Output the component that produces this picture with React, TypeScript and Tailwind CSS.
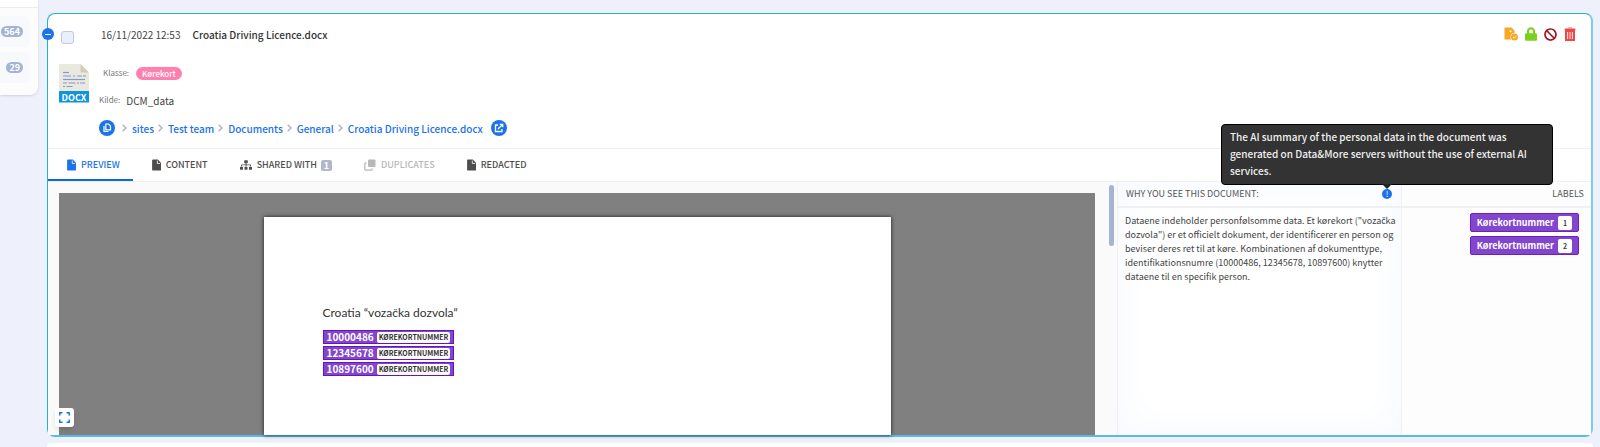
import { FaSitemap, FaLock, FaBan } from 'react-icons/fa';

const crumbs = ['sites', 'Test team', 'Documents', 'General', 'Croatia Driving Licence.docx'];
const numbers = ['10000486', '12345678', '10897600'];

function FileIcon() {
  return (
    <svg viewBox="0 0 9 12" className="w-[9px] h-3 shrink-0">
      <path d="M1 .5h4.800L9 3.800v6.900c0 .5-.4.900-.9.900H1c-.5 0-.9-.4-.9-.9V1.400C.1.900.5.500 1 .5z" fill="currentColor" />
      <path d="M5.300 1.600v2.900h2.800" fill="none" stroke="#fff" strokeWidth="0.8" />
    </svg>
  );
}

function DuplicateIcon() {
  return (
    <svg viewBox="0 0 12 12" className="w-3 h-3 shrink-0" fill="none">
      <rect x="4" y="0.5" width="7.500" height="7.500" rx="1" fill="currentColor" />
      <path d="M2.500 3.800H1.800c-.6 0-1 .4-1 1v5.400c0 .6.4 1 1 1h5.400c.6 0 1-.4 1-1V9.500" stroke="currentColor" strokeWidth="1.3" />
    </svg>
  );
}

function Chevron() {
  return (
    <svg viewBox="0 0 5 8" className="w-[5px] h-2 mr-[5px] shrink-0" fill="none" stroke="#b0b3c6" strokeWidth="1.500">
      <path d="M.7.700L4 4 .7 7.300" />
    </svg>
  );
}

function DocxIcon() {
  return (
    <svg viewBox="0 0 30 39" className="w-[30px] h-[39px]">
      <path d="M1 0h20.500l8.500 8.500V27H0V1a1 1 0 0 1 1-1z" fill="#e9e9e0" />
      <path d="M21.500 0v8.500H30z" fill="#d0cfb0" />
      <g stroke="#8697cb" strokeWidth="1.200">
        <path d="M4 8.500h6" />
        <path d="M4 12h8M14 12h2M18 12h5M24 12h3" />
        <path d="M4 15.500h22" />
        <path d="M4 19h4M9.500 19h7M18 19h2M21 19h5" />
        <path d="M4 22.500h2M7.500 22.500h6" />
      </g>
      <path d="M0 27h30v11.500H0z" fill="#0e95de" />
      <text x="15" y="36.500" textAnchor="middle" fontSize="9" fontWeight="700" fill="#fff">DOCX</text>
    </svg>
  );
}

function Tab({ label, active, disabled, children, count }: any) {
  return (
    <button
      type="button"
      disabled={disabled}
      className={
        'h-8 flex items-center gap-[5px] border-b-2 pt-[2px] pl-[19px] pr-[13px] text-[9px] font-medium ' +
        (active
          ? 'border-[#0d66e8] text-[#1a73e8]'
          : disabled
            ? 'border-transparent text-[#b8b8b8]'
            : 'border-transparent text-[#4d4d4d]')
      }
    >
      {children}
      <span>{label}</span>
      {count && <span className="-ml-px w-[11px] h-[11px] rounded-xs bg-[#b3b7cb] text-white leading-[11px] font-bold">{count}</span>}
    </button>
  );
}

function LabelTag({ count }: { count: number }) {
  return (
    <div className="flex items-center gap-1 h-[19px] px-[6px] rounded-xs border border-[#6f1fc4] bg-[#8246cc] text-white text-[9px] font-bold">
      <span>Kørekortnummer</span>
      <span className="w-[14px] h-[14px] rounded-xs bg-white text-[#444] text-[7px] leading-[14px] text-center">{count}</span>
    </div>
  );
}

function SidebarRow({ count }: { count: number }) {
  return (
    <div className="mr-2 h-[31px] rounded-r-md bg-[#f8f9fc] flex items-center justify-end pr-[7px]">
      <span className="rounded-full px-[3px] h-[11px] leading-[11px] bg-[#a3b4d4] text-white text-[9px] font-bold">{count}</span>
    </div>
  );
}

function Sidebar() {
  return (
    <aside className="w-[38px] shrink-0 h-[95px] bg-[#fcfcfd] rounded-br-lg shadow-sm">
      <div className="h-2 mb-2 bg-white border-b border-[#ebebf0]" />
      <div className="flex flex-col gap-[5px]">
        <SidebarRow count={564} />
        <SidebarRow count={29} />
      </div>
    </aside>
  );
}

function DocumentHeader() {
  return (
    <header className="relative h-[135px] border-b border-[#f0f0f0]">
      <button type="button" aria-label="Collapse" className="absolute -left-[6px] top-[14px] w-3 h-3 rounded-full bg-[#1a73e8] flex items-center justify-center">
        <span className="w-[6px] h-px bg-white" />
      </button>
      <div className="flex items-center h-10 mb-[2px] pl-[13px] pr-[15px]">
        <input type="checkbox" aria-label="Select document" className="appearance-none w-[13px] h-[13px] mt-[7px] rounded-[3px] border border-[#c3c8dc] bg-[#e9effd]" />
        <time className="ml-[27px] text-[10px] text-[#444]">16/11/2022 12:53</time>
        <h2 className="ml-3 text-[10px] font-medium text-[#333]">Croatia Driving Licence.docx</h2>
        <div className="ml-auto flex items-center gap-[7px]">
          <button type="button" aria-label="Approve document">
            <svg viewBox="0 0 14 14" className="w-[14px] h-[14px]">
              <path d="M1 .5h6.500L10.500 3.500v4H9L7 9.500V12.500H.500V1z" fill="#f8a825" />
              <circle cx="6.500" cy="4.300" r="1" fill="#fff" />
              <circle cx="10.500" cy="10" r="4" fill="#fff" />
              <circle cx="10.500" cy="10" r="3.500" fill="#f8a825" />
              <path d="M9 10l1.200 1.200 2-2.200" fill="none" stroke="#fff" strokeWidth=".8" />
            </svg>
          </button>
          <button type="button" aria-label="Lock"><FaLock className="w-3 h-[14px] text-[#7ad11d]" /></button>
          <button type="button" aria-label="Ignore"><FaBan className="w-[13px] h-[13px] text-[#a80f1c]" /></button>
          <button type="button" aria-label="Delete">
            <svg viewBox="0 0 12 14" className="w-3 h-[14px]" fill="none" stroke="#f04848">
              <path d="M4 .8h4" stroke="#c9a0a0" />
              <path d="M.7 2.500h10.600" strokeWidth="2" />
              <path d="M2 4h8v9H2z" fill="#fbd5d5" strokeWidth="2" />
              <path d="M4.800 4v9M7.200 4v9" strokeWidth="1.300" />
            </svg>
          </button>
        </div>
      </div>
      <div className="flex pl-[11px]">
        <div className="pt-2"><DocxIcon /></div>
        <div className="pl-[10px]">
          <div className="flex items-center h-[34px] pl-1 gap-[7px]">
            <span className="text-[8px] text-[#777]">Klasse:</span>
            <span className="rounded-full h-[13px] leading-[13px] px-[6px] bg-[#ff7fb0] text-white text-[8px] font-medium">Kørekort</span>
          </div>
          <div className="flex items-center h-5 gap-[6px]">
            <span className="text-[8px] text-[#777]">Kilde:</span>
            <span className="text-[10px] text-[#444]">DCM_data</span>
          </div>
          <nav className="flex items-center h-9 text-[10px] font-medium text-[#1a73e8]">
            <button type="button" aria-label="Copy path" className="mr-[7px] w-4 h-4 rounded-full bg-[#1a73e8] flex items-center justify-center">
              <svg viewBox="0 0 10 10" className="w-[10px] h-[10px]" fill="none" stroke="#fff" strokeWidth="1.200">
                <path d="M3.800 1h2.700L8.500 3v3.800H3.800z" />
                <path d="M2 3v5.500h4.500" />
              </svg>
            </button>
            {crumbs.map((crumb) => (
              <span key={crumb} className="flex items-center">
                <Chevron />
                <a href="#" className="mr-1">{crumb}</a>
              </span>
            ))}
            <button type="button" aria-label="Open document" className="ml-1 w-4 h-4 rounded-full bg-[#1a73e8] flex items-center justify-center">
              <svg viewBox="0 0 10 10" className="w-[10px] h-[10px]" fill="none" stroke="#fff" strokeWidth="1.300">
                <path d="M4 2H1.500v6.500H8V6" />
                <path d="M4 6l4.500-4.500M5.700 1.300h3v3" />
              </svg>
            </button>
          </nav>
        </div>
      </div>
    </header>
  );
}

function Preview() {
  return (
    <section className="relative flex-1 min-w-0 flex bg-[#fafafa] pt-[11px] pl-[11px]">
      <div className="flex-1 bg-[#808080] pt-6 flex justify-center">
        <article className="w-[627px] bg-white shadow-[0_0_4px_rgba(0,0,0,0.8)] px-[59px] pt-[86px]">
          <p className="font-[Lato,sans-serif] text-[12px] leading-5 text-[#333]">Croatia “vozačka dozvola”</p>
          <ul className="mt-[7px] flex flex-col items-start gap-[2px]">
            {numbers.map((n) => (
              <li key={n} className="flex items-center gap-[3px] h-[14px] px-[3px] border border-[#6a12c2] bg-[#8246cc] text-white text-[10px] font-bold">
                <span className="leading-3">{n}</span>
                <span className="h-[11px] leading-[11px] px-[2px] rounded-xs bg-white text-[#333] text-[7px]">KØREKORTNUMMER</span>
              </li>
            ))}
          </ul>
        </article>
      </div>
      <div className="w-[22px] shrink-0 flex justify-center">
        <div className="-mt-2 ml-[10px] w-[5px] h-[61px] rounded-full bg-[#a3b4d4]" />
      </div>
      <button type="button" aria-label="Full screen" className="absolute left-[7px] bottom-2 w-[19px] h-[19px] rounded-[3px] bg-white shadow-md flex items-center justify-center">
        <svg viewBox="0 0 11 11" className="w-[11px] h-[11px]" fill="none" stroke="#1a73e8" strokeWidth="1.500">
          <path d="M.8 3.500V.8h2.700M7.500.8h2.700v2.700M10.200 7.500v2.700H7.500M3.500 10.200H.8V7.500" />
        </svg>
      </button>
    </section>
  );
}

function Summary() {
  return (
    <section className="w-[285px] shrink-0 border-x border-[#eef0f4] bg-white shadow-[inset_0_0_40px_#f5f8ff]">
      <div className="flex items-center justify-between h-[26px] pl-2 pr-[9px] border-b-2 border-[#f0f0f4]">
        <h3 className="text-[9px] text-[#555]">WHY YOU SEE THIS DOCUMENT:</h3>
        <div className="relative">
          <button type="button" aria-label="About the summary" className="block w-[10px] h-[10px] rounded-full bg-[#1a73e8] text-white text-[8px] leading-[10px]">!</button>
          <div role="tooltip" className="absolute bottom-[14px] -left-[161px] w-[332px] h-[61px] rounded-sm border border-black bg-[#333] px-2 pt-[3px] text-[10px] leading-[17px] font-medium text-[#f0f0f0]">
            The AI summary of the personal data in the document was generated on Data&amp;More servers without the use of external AI services.
            <span className="absolute left-[160px] top-full w-0 h-0 border-x-[5px] border-x-transparent border-t-[5px] border-t-[#222]" />
          </div>
        </div>
      </div>
      <p className="pl-[7px] pr-1 pt-[6px] text-[9px] leading-[14px] text-[#444]">
        Dataene indeholder personfølsomme data. Et kørekort ("voza<span className="font-['Noto_Sans',sans-serif] leading-none">č</span>ka dozvola") er et officielt dokument, der identificerer en person og beviser deres ret til at køre. Kombinationen af dokumenttype, identifikationsnumre (10000486, 12345678, 10897600) knytter dataene til en specifik person.
      </p>
    </section>
  );
}

function Labels() {
  return (
    <section className="w-[189px] shrink-0 bg-[#fdfdfe]">
      <div className="flex items-center justify-end h-[26px] pr-[7px] border-b-2 border-[#f0f0f4]">
        <h3 className="text-[9px] text-[#555]">LABELS</h3>
      </div>
      <div className="flex flex-col items-end gap-1 pt-[5px] pr-3">
        <LabelTag count={1} />
        <LabelTag count={2} />
      </div>
    </section>
  );
}

export default function App() {
  return (
    <div className="h-screen flex overflow-hidden bg-[#eef0fc] font-['Noto_Sans_CJK_SC','Noto_Sans',sans-serif]">
      <Sidebar />
      <main className="flex-1 min-w-0 flex flex-col pl-[9px] pr-[7px] pt-[13px]">
        <article className="flex-1 min-h-0 flex flex-col bg-white rounded-lg border border-[#22b0da] border-r-2 border-r-[#7ccbef] border-b-2 border-b-[#55bce2]">
          <DocumentHeader />
          <div className="flex border-b border-[#f0f0f0]">
            <Tab label="PREVIEW" active><FileIcon /></Tab>
            <Tab label="CONTENT"><FileIcon /></Tab>
            <Tab label="SHARED WITH" count="1"><FaSitemap className="w-3 h-[10px]" /></Tab>
            <Tab label="DUPLICATES" disabled><DuplicateIcon /></Tab>
            <Tab label="REDACTED"><FileIcon /></Tab>
          </div>
          <div className="flex-1 min-h-0 flex">
            <Preview />
            <Summary />
            <Labels />
          </div>
        </article>
        <div className="mt-[6px] h-1 rounded-t-lg bg-white" />
      </main>
    </div>
  );
}
